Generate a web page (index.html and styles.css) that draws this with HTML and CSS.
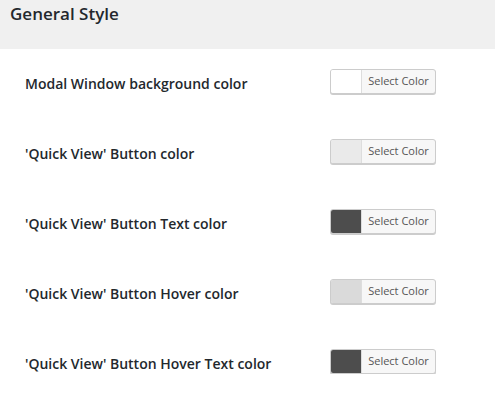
FILE: index.html
```html
<!DOCTYPE html>
<html lang="en">
<head>
    <meta charset="UTF-8">
    <title>General Style</title>
    <link rel="stylesheet" href="styles.css">
</head>
<body>
    <div class="section-head">General Style</div>
    <div class="options">
        <div class="option-row">
            <span class="option-label">Modal Window background color</span>
            <button class="color-btn"><span class="swatch swatch-white"></span><span class="btn-text">Select Color</span></button>
        </div>
        <div class="option-row">
            <span class="option-label">'Quick View' Button color</span>
            <button class="color-btn"><span class="swatch swatch-light"></span><span class="btn-text">Select Color</span></button>
        </div>
        <div class="option-row">
            <span class="option-label">'Quick View' Button Text color</span>
            <button class="color-btn"><span class="swatch swatch-dark"></span><span class="btn-text">Select Color</span></button>
        </div>
        <div class="option-row">
            <span class="option-label">'Quick View' Button Hover color</span>
            <button class="color-btn"><span class="swatch swatch-grey"></span><span class="btn-text">Select Color</span></button>
        </div>
        <div class="option-row">
            <span class="option-label">'Quick View' Button Hover Text color</span>
            <button class="color-btn"><span class="swatch swatch-dark"></span><span class="btn-text">Select Color</span></button>
        </div>
    </div>
</body>
</html>
```

FILE: styles.css
```css
body {
    margin: 0;
    padding: 0;
    background-color: #fff;
    font-family: "Open Sans", "Liberation Sans", sans-serif;
    color: #23282d;
}
.section-head {
    height: 49px;
    box-sizing: border-box;
    padding: 2px 10px 0;
    background-color: #f0f0f0;
    font-size: 17px;
    font-weight: 600;
    line-height: 24px;
}
.options {
    padding: 20px 0 0 25px;
}
.option-row {
    display: flex;
    align-items: center;
    height: 25px;
    margin-bottom: 45px;
}
.option-row:last-child {
    margin-bottom: 0;
}
.option-label {
    width: 305px;
    padding-top: 3px;
    font-size: 14px;
    font-weight: 600;
}
.color-btn {
    display: flex;
    align-items: stretch;
    width: 106px;
    height: 25px;
    padding: 0;
    border: 1px solid #ccc;
    border-radius: 3px;
    background-color: #f7f7f7;
    box-shadow: 0 1px 0 #ccc;
    overflow: hidden;
    font-family: inherit;
    cursor: pointer;
}
.swatch {
    width: 30px;
    border-right: 1px solid #ddd;
}
.swatch-white { background-color: #fff; }
.swatch-light { background-color: #eaeaea; }
.swatch-dark { background-color: #4d4d4d; }
.swatch-grey { background-color: #dadada; }
.btn-text {
    flex: 1;
    font-size: 11px;
    line-height: 22px;
    color: #555;
    text-align: center;
}
```
